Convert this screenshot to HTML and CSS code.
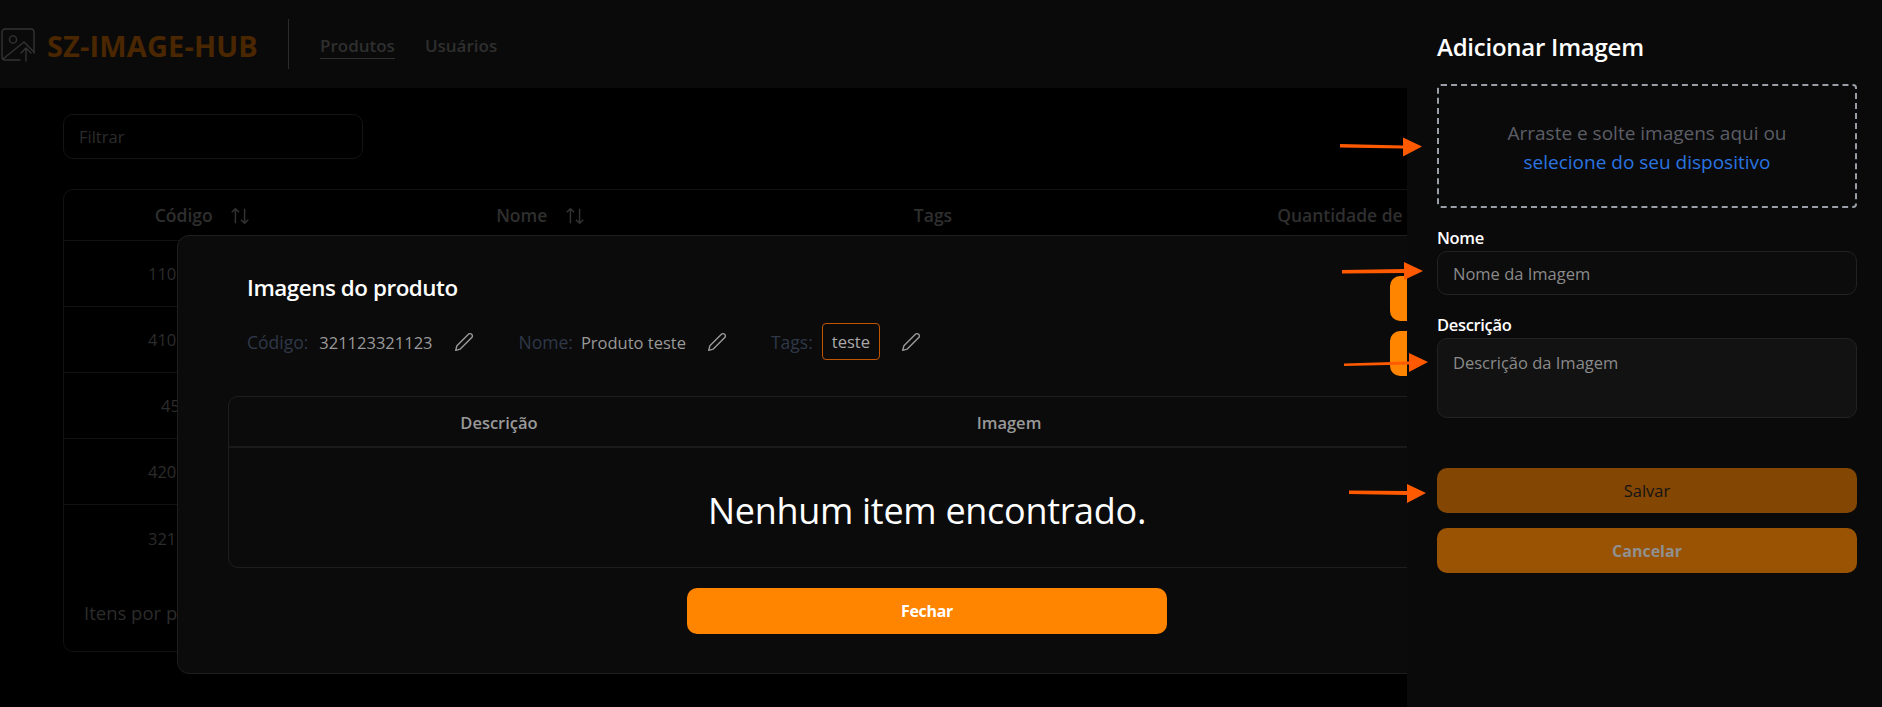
FILE: index.html
```html
<!DOCTYPE html>
<html lang="pt-BR">
<head>
  <meta charset="UTF-8" />
  <meta name="viewport" content="width=device-width, initial-scale=1.0" />
  <title>SZ-IMAGE-HUB</title>
  <link rel="stylesheet" href="styles.css">
</head>
<body>
  <!-- Top bar, dimmed behind the overlay -->
  <header class="topbar">
    <svg class="logo-icon" viewBox="0 0 34 34" fill="none" stroke="#333" stroke-width="1.4" stroke-linecap="round" stroke-linejoin="round">
      <path d="M19 32H4a3 3 0 0 1-3-3V4a3 3 0 0 1 3-3h26a3 3 0 0 1 3 3v21"/>
      <circle cx="12" cy="11.5" r="3.6"/>
      <path d="M2 31 L23 14 L33 24"/>
      <path d="M25 33V20M20 25l5-5 5 5"/>
    </svg>
    <span class="logo-text">SZ-IMAGE-HUB</span>
    <nav class="nav">
      <a class="nav-link active">Produtos</a>
      <a class="nav-link">Usuários</a>
    </nav>
  </header>

  <main class="content">
    <input class="filter" placeholder="Filtrar" />

    <div class="table-wrap">
      <div class="row row-head">
        <div>Código
          <svg class="sort" viewBox="0 0 24 24" fill="none" stroke="#333" stroke-width="1.6"><path d="M21 16l-4 4-4-4M17 20V4M3 8l4-4 4 4M7 4v16"/></svg>
        </div>
        <div>Nome
          <svg class="sort" viewBox="0 0 24 24" fill="none" stroke="#333" stroke-width="1.6"><path d="M21 16l-4 4-4-4M17 20V4M3 8l4-4 4 4M7 4v16"/></svg>
        </div>
        <div>Tags</div>
        <div>Quantidade de Imagens</div>
      </div>
      <div class="row"><div class="code">110</div></div>
      <div class="row"><div class="code">410</div></div>
      <div class="row"><div class="code code-short">45</div></div>
      <div class="row"><div class="code">420</div></div>
      <div class="row row-last"><div class="code">321</div></div>
      <div class="table-foot">Itens por p</div>
    </div>
  </main>

  <!-- Product images modal -->
  <section class="modal">
    <div class="modal-head">
      <div>
        <h2 class="modal-title">Imagens do produto</h2>
        <div class="meta">
          <span class="meta-label">Código:</span>
          <span class="meta-value">321123321123</span>
          <svg class="pencil pencil-code" viewBox="0 0 24 24" fill="none" stroke="#999" stroke-width="1.7" stroke-linejoin="round"><path d="M17 3a2.85 2.83 0 1 1 4 4L7.5 20.5 2 22l1.5-5.5Z"/></svg>
          <span class="meta-label meta-label-name">Nome:</span>
          <span class="meta-value">Produto teste</span>
          <svg class="pencil pencil-name" viewBox="0 0 24 24" fill="none" stroke="#999" stroke-width="1.7" stroke-linejoin="round"><path d="M17 3a2.85 2.83 0 1 1 4 4L7.5 20.5 2 22l1.5-5.5Z"/></svg>
          <span class="meta-label meta-label-tags">Tags:</span>
          <span class="tag">teste</span>
          <svg class="pencil" viewBox="0 0 24 24" fill="none" stroke="#999" stroke-width="1.7" stroke-linejoin="round"><path d="M17 3a2.85 2.83 0 1 1 4 4L7.5 20.5 2 22l1.5-5.5Z"/></svg>
        </div>
      </div>
      <div class="modal-actions">
        <button class="btn-orange"></button>
        <button class="btn-orange"></button>
      </div>
    </div>

    <div class="images-table">
      <div class="images-head">
        <div>Descrição</div>
        <div>Imagem</div>
        <div></div>
      </div>
      <div class="images-empty">Nenhum item encontrado.</div>
    </div>

    <div class="modal-foot">
      <button class="btn-close">Fechar</button>
    </div>
  </section>

  <!-- Add image side panel -->
  <aside class="panel">
    <h2 class="panel-title">Adicionar Imagem</h2>
    <div class="dropzone">
      <span>Arraste e solte imagens aqui ou</span>
      <a class="dropzone-link">selecione do seu dispositivo</a>
    </div>
    <label class="field-label">Nome</label>
    <input class="field-input" placeholder="Nome da Imagem" />
    <label class="field-label field-label-desc">Descrição</label>
    <textarea class="field-area" placeholder="Descrição da Imagem"></textarea>
    <button class="btn-save">Salvar</button>
    <button class="btn-cancel">Cancelar</button>
  </aside>

  <!-- Annotation arrows drawn on top of the screenshot -->
  <svg class="arrows" viewBox="0 0 1882 707" fill="#ff5a00">
    <path d="M1340 144l63 1.500v-8l19 9-19 10v-8l-63-1z"/>
    <path d="M1342 270l62-1v-7l19 9-19 9v-7l-62 .5z"/>
    <path d="M1344 363.500l65-2v-8.500l19 9-19 10v-7.500l-65 1.500z"/>
    <path d="M1349 490.500l58 .5v-7l19 9-19 10v-8l-58-1z"/>
  </svg>
</body>
</html>
```

FILE: styles.css
```css
* {
  box-sizing: border-box;
}
body {
  margin: 0;
  height: 707px;
  overflow: hidden;
  background-color: #000;
  font-family: "Open Sans", "Noto Sans", sans-serif;
  font-size: 16.5px;
}

/* top bar */
.topbar {
  display: flex;
  align-items: center;
  height: 88px;
  background-color: #0a0a0a;
  padding-left: 1px;
}
.logo-icon {
  width: 34px;
  height: 34px;
  margin-top: 2px;
}
.logo-text {
  margin: 2px 0 0 12px;
  font-size: 29px;
  font-weight: 700;
  color: #4a2700;
  letter-spacing: 0.005em;
}
.nav {
  display: flex;
  align-items: center;
  gap: 30px;
  height: 50px;
  margin-left: 30px;
  padding-left: 31px;
  border-left: 1px solid #2c2c2c;
}
.nav-link {
  margin-top: 4px;
  font-size: 17px;
  font-weight: 600;
  color: #2f2f2f;
  padding-bottom: 1px;
  border-bottom: 1px solid transparent;
}
.nav-link.active {
  border-bottom-color: #2f2f2f;
}

/* products list behind the modal */
.content {
  padding: 26px 0 0 63px;
}
.filter {
  display: block;
  width: 300px;
  height: 45px;
  padding: 0 15px;
  background: transparent;
  border: 1px solid #141414;
  border-radius: 10px;
  font: inherit;
}
.filter::placeholder {
  color: #2c2c2c;
}
.table-wrap {
  width: 1780px;
  height: 463px;
  margin-top: 30px;
  border: 1px solid #121212;
  border-radius: 10px;
  color: #2c2c2c;
}
.row {
  display: grid;
  grid-template-columns: 278px 398px 386px 504px 1fr;
  align-items: center;
  height: 66px;
  text-align: center;
  border-bottom: 1px solid #121212;
}
.row-head {
  height: 51px;
  font-size: 17.5px;
  font-weight: 600;
  color: #2f2f2f;
}
.row-last {
  border-bottom: none;
}
.code {
  padding-left: 84px;
  text-align: left;
}
.code-short {
  padding-left: 97px;
}
.sort {
  width: 22px;
  height: 22px;
  margin-left: 12px;
  vertical-align: -5px;
}
.table-foot {
  padding: 29px 0 0 20px;
  font-size: 18.5px;
}

/* modal */
.modal {
  position: fixed;
  top: 235px;
  left: 177px;
  width: 1500px;
  height: 439px;
  padding: 40px 50px 0;
  background-color: #0b0b0b;
  border: 1px solid #1e1e1e;
  border-radius: 12px;
}
.modal-head {
  display: flex;
  justify-content: space-between;
  height: 120px;
  padding-left: 19px;
}
.modal-title {
  margin: -1px 0 22px;
  font-size: 22.4px;
  line-height: 26px;
  font-weight: 600;
  letter-spacing: -0.02em;
  color: #fff;
}
.meta {
  display: flex;
  align-items: center;
  height: 37px;
  color: #999;
}
.meta-label {
  margin: 1px 11px 0 0;
  font-size: 17.5px;
  color: #2f3848;
}
.meta-label-name {
  margin-right: 8px;
}
.meta-label-tags {
  margin-right: 9px;
}
.meta-value {
  margin-top: 1px;
}
.tag {
  padding: 0 9px;
  line-height: 35px;
  border: 1px solid #c05500;
  border-radius: 4px;
  color: #aaa;
}
.pencil {
  width: 20px;
  height: 20px;
  margin-left: 21px;
}
.pencil-code {
  margin-right: 45px;
}
.pencil-name {
  margin-right: 44px;
}
.modal-actions {
  display: flex;
  flex-direction: column;
  gap: 10px;
  width: 236px;
}
.btn-orange {
  height: 45px;
  border: none;
  border-radius: 10px;
  background-color: #ff8500;
}
.images-table {
  height: 172px;
  border: 1px solid #1e1e1e;
  border-radius: 10px;
}
.images-head {
  display: grid;
  grid-template-columns: 540px 480px 1fr;
  align-items: center;
  height: 51px;
  padding-top: 2px;
  text-align: center;
  font-weight: 600;
  color: #999;
  border-bottom: 2px solid #1a1a1a;
}
.images-empty {
  padding-top: 39px;
  text-align: center;
  font-size: 36px;
  line-height: 48px;
  letter-spacing: -0.3px;
  color: #fff;
}
.modal-foot {
  display: flex;
  justify-content: center;
  margin-top: 20px;
}
.btn-close {
  width: 480px;
  height: 46px;
  border: none;
  border-radius: 10px;
  background-color: #ff8500;
  color: #fff;
  font: inherit;
  font-size: 16px;
  font-weight: 700;
  letter-spacing: -0.02em;
}

/* side panel */
.panel {
  position: fixed;
  top: 0;
  right: 0;
  bottom: 0;
  width: 475px;
  padding: 30px 25px 0 30px;
  background-color: #0a0a0a;
}
.panel-title {
  margin: 0 0 21px;
  font-size: 24px;
  line-height: 33px;
  font-weight: 600;
  letter-spacing: -0.01em;
  color: #fff;
}
.dropzone {
  display: flex;
  flex-direction: column;
  align-items: center;
  justify-content: center;
  gap: 3px;
  height: 124px;
  padding-top: 2px;
  border: 2px dashed #9a9ea6;
  border-radius: 4px;
  font-size: 19px;
  color: #5c5e66;
}
.dropzone-link {
  color: #2b74e0;
}
.field-label {
  display: block;
  margin: 20px 0 3px;
  line-height: 20px;
  font-size: 16.5px;
  font-weight: 600;
  letter-spacing: -0.02em;
  color: #fff;
}
.field-label-desc {
  margin: 19px 0 2px;
  line-height: 22px;
}
.field-input,
.field-area {
  display: block;
  width: 100%;
  padding: 0 15px;
  border: 1px solid #222;
  border-radius: 10px;
  background-color: #0c0c0c;
  font: inherit;
  color: #fff;
}
.field-input {
  height: 44px;
}
.field-area {
  height: 80px;
  padding-top: 12px;
  background-color: #121212;
  resize: none;
}
.field-input::placeholder,
.field-area::placeholder {
  color: #8a8a8a;
}
.btn-save,
.btn-cancel {
  display: block;
  width: 100%;
  height: 45px;
  border: none;
  border-radius: 10px;
  font: inherit;
}
.btn-save {
  margin-top: 50px;
  background-color: #834603;
  color: #141414;
}
.btn-cancel {
  margin-top: 15px;
  background-color: #9a5203;
  color: #909090;
  font-size: 16px;
  font-weight: 700;
}

/* annotation arrows */
.arrows {
  position: fixed;
  top: 0;
  left: 0;
  width: 1882px;
  height: 707px;
  pointer-events: none;
}
```
